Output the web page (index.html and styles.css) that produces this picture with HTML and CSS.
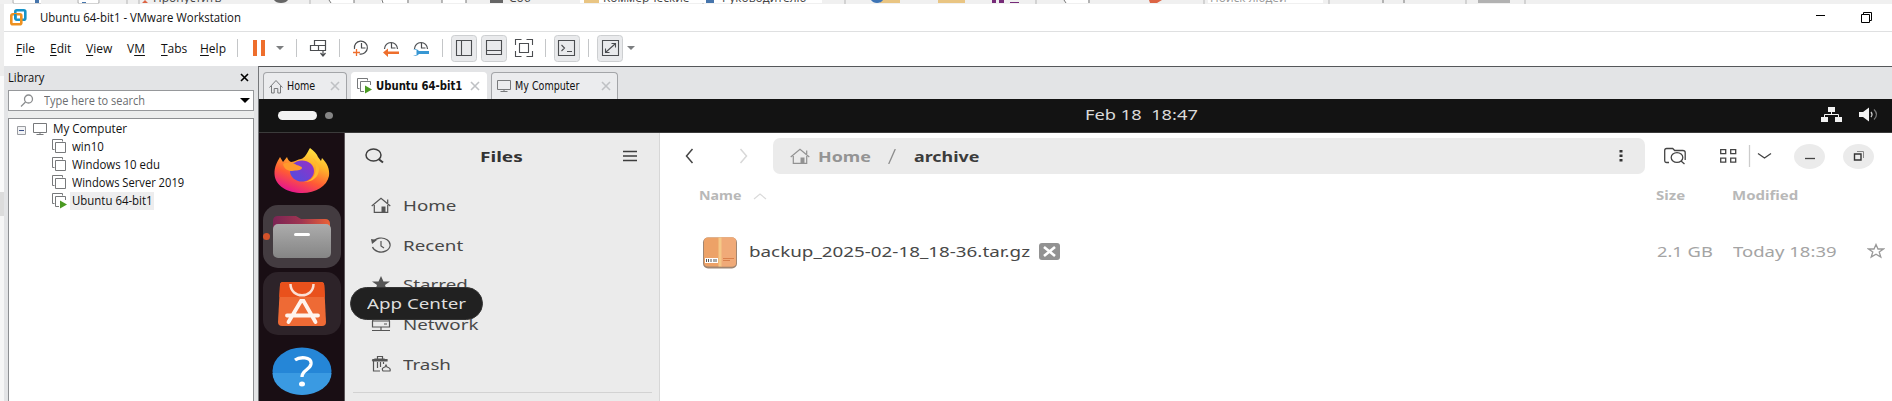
FILE: index.html
```
<!DOCTYPE html>
<html lang="en">
<head>
<meta charset="utf-8">
<title>Ubuntu 64-bit1 - VMware Workstation</title>
<link rel="stylesheet" href="styles.css">
</head>
<body>
<svg width="0" height="0" class="defs">
  <defs>
    <g id="house"><path d="M.5 8.5 7 1.5l6.500 7M2.500 7v7h2.700V9.500h3.600V14h2.700V7"/></g>
    <g id="vm"><path d="M2.500 10.500h-2V.5h10v2M3.500 3.500h10v10h-10z"/></g>
    <g id="vmrun"><path d="M2.500 10.500h-2V.5h10v2M7 13.500H3.500v-10h10V7"/><path d="M8 7.500l7 4-7 4z" fill="#4a9a22" stroke="none"/></g>
    <g id="monitor"><path d="M.5.5h13v9H.5zM7 9.500v2M3.500 11.500h7"/></g>
    <g id="cross"><path d="M1 1l8 8M9 1l-8 8"/></g>
    <g id="nhouse"><path d="M.7 9 10 1.200 19.300 9M3.300 8v7.300h13.400V8M16.700 6V2.500"/><path d="M10.500 9.500h4v5.500h-4z" fill="currentColor" stroke="none"/></g>
  </defs>
</svg>

<div class="behind">
  <svg class="behind-art" width="1892" height="4">
    <path d="M13 0v3h28M78 0v3h21V0M127 0v4M139 0v4M310 0v4M638 0v4M703 0v4M845 0v4M1036 0v4M1204 0v4M1329 0v4M1466 0v4M1525 0v4" fill="none" stroke="#b5b5b5"/>
    <path d="M14 0h27v3H14zM79 0h19v3H79zM330 0h24v3h-24zM381 0h26v3h-26zM442 0h24v3h-24zM580 0h242v3H580zM1065 0h23v3h-23zM1208 0h115v3h-115z" fill="#fff"/>
    <path d="M35 0h4v3h-4zM82 2h4v1h-4zM706 0h8v3h-8z" fill="#4675ac"/>
    <path d="M142 3l3-3 3 3zM1149 0h13l-5 3h-7z" fill="#dc6444"/>
    <path d="M274 0h14q-2 3-7 3t-7-3M490 0h13v3h-13z" fill="#666"/>
    <path d="M584 0h15v3h-15zM880 0h20v3h-20zM938 0h27v3h-27z" fill="#e9c583"/>
    <path d="M871 0h12q-2 3-6 3t-6-3" fill="#3d74b5"/>
    <path d="M992 0h4v3h-4zM999 0h5v3h-5zM1010 2h9v1h-9z" fill="#762b78"/>
    <path d="M329 0l2 3M354 0v3M382 0l1 3M408 0v3M442 0v3M466 0v3M1064 0l2 3M1089 0v3M1383 0v3M1404 0v3" stroke="#777" fill="none"/>
    <path d="M1478 0h32v3h-32z" fill="#b2b2b2"/>
  </svg>
  <span class="bt b1">Пропустить</span><span class="bt b2">Соб</span><span class="bt b3">Коммерческие</span><span class="bt b4">Руководителю</span><span class="bt b5">Поиск людей</span>
</div>

<div class="shell">
<div class="sliver"></div>
<div class="window">
  <header class="title">
    <svg width="17" height="17" viewBox="0 0 17 17" fill="none" stroke-width="2.600"><rect x="5.300" y="1.300" width="10" height="9.500" rx="1.500" stroke="#1793c8"/><rect x="1.300" y="5.300" width="10" height="10" rx="1.500" stroke="#ee9120"/><path d="M5.300 5v4.500" stroke="#1793c8"/></svg>
    <span class="t title-text">Ubuntu 64-bit1 - VMware Workstation</span>
    <svg class="winbtns" width="58" height="13" fill="none" stroke="#000"><path d="M0 4.500h9M45.500 3.500h8v8h-8zM47.500 3V1.500h8V9.500H54"/></svg>
  </header>

  <nav class="menu">
    <span class="m m-file"><u>F</u>ile</span><span class="m m-edit"><u>E</u>dit</span><span class="m m-view"><u>V</u>iew</span><span class="m m-vm">V<u>M</u></span><span class="m m-tabs"><u>T</u>abs</span><span class="m m-help"><u>H</u>elp</span>
    <svg class="tools" width="420" height="32" viewBox="230 33 420 32" fill="none" stroke="#4b4d50">
      <path d="M237.500 39v18M296.500 39v18M339.500 39v18M442.500 39v18M545.500 39v18M588.500 39v18" stroke="#c4c6c8"/>
      <path d="M253 40h4v16h-4zM261 40h4v16h-4z" fill="#ee6e2c" stroke="none"/>
      <path d="M276 46h8l-4 4zM627 46h8l-4 4z" fill="#7c7e80" stroke="none"/>
      <path d="M314.500 40.500h11v5h-11zM310.500 45.500h8v5h-8zM318.500 45.500h7v5h-7zM323 50v6M320.500 53l2.500 3 2.500-3" stroke-width="1.200"/>
      <path d="M354.500 49a6.500 6.500 0 1 1 5 5M361.500 43v5h4" stroke-width="1.200"/><path d="M353 52.500h7M356.500 49v7" stroke="#ee6e2c" stroke-width="1.300"/>
      <path d="M384.500 49a6.500 6.500 0 1 1 13 0M391.500 43v5h4" stroke-width="1.200"/><path d="M383 52.500l5-4v3h11v2.500h-11v3z" fill="#ee6e2c" stroke="none"/>
      <path d="M414.500 49a6.500 6.500 0 1 1 13 0M421.500 43v5h4" stroke-width="1.200"/><path d="M413 50q4-2 6 1h10v3h-10q-2 3-6 1h3.500v-5z" fill="#3897d3" stroke="none"/>
      <g fill="#e9eaec" stroke="#cdcfd1"><rect x="451.500" y="35.500" width="25" height="26" rx="3"/><rect x="481.500" y="35.500" width="25" height="26" rx="3"/><rect x="554.500" y="35.500" width="25" height="26" rx="3"/><rect x="597.500" y="35.500" width="25" height="26" rx="3"/></g>
      <path d="M456.500 40.500h15v15h-15zM461.500 41v14M486.500 40.500h15v14h-15zM487 50.500h14M519.500 43.500h9v9h-9zM515.500 45v-5.500h6M526.500 39.500h6V45M532.500 51v5.500h-6M521.500 56.500h-6V51M558.500 40.500h16v15h-16zM561.500 45l3 3-3 3M567 51.500h5M602.500 40.500h16v15h-16zM606 52l9-8M611.500 43.500h4v4M609.500 52.500h-4v-4" stroke-width="1.100"/>
    </svg>
  </nav>

  <div class="body">
    <aside class="library">
      <div class="lib-head"><span class="t lib-t">Library</span><svg width="10" height="10" fill="none" stroke="#000" stroke-width="1.600"><path d="M1 1l7 7M8 1l-7 7"/></svg></div>
      <div class="search">
        <svg width="14" height="14" fill="none" stroke="#8b8d8f" stroke-width="1.300"><circle cx="8.500" cy="5" r="4"/><path d="M5.500 8 1 12.500"/></svg>
        <span class="t search-t">Type here to search</span>
        <svg class="arrow" width="10" height="5"><path d="M0 0h10L5 5z"/></svg>
      </div>
      <div class="tree">
        <div class="row root"><svg class="minus" width="9" height="9" fill="none"><path d="M.5.5h8v8h-8z" stroke="#9a9ca0" fill="#f2f3f5"/><path d="M2 4.500h5" stroke="#3a4f87"/></svg><svg width="14" height="12" fill="none" stroke="#77797b"><use href="#monitor"/></svg><span class="t n-my">My Computer</span></div>
        <div class="row"><svg class="i" width="15" height="16"><use href="#vm"/></svg><span class="t n-w10">win10</span></div>
        <div class="row"><svg class="i" width="15" height="16"><use href="#vm"/></svg><span class="t n-edu">Windows 10 edu</span></div>
        <div class="row"><svg class="i" width="15" height="16"><use href="#vm"/></svg><span class="t n-srv">Windows Server 2019</span></div>
        <div class="row"><svg class="i" width="15" height="16"><use href="#vmrun"/></svg><span class="sel"><span class="t n-ubu">Ubuntu 64-bit1</span></span></div>
      </div>
    </aside>

    <section class="console">
      <div class="tabs">
        <div class="tab tab-home"><svg class="i" width="14" height="15"><use href="#house"/></svg><span class="t tt-home">Home</span><svg class="x" width="10" height="10"><use href="#cross"/></svg></div>
        <div class="tab tab-ubu active"><svg class="i" width="15" height="16"><use href="#vmrun"/></svg><span class="t tt-ubu">Ubuntu 64-bit1</span><svg class="x" width="10" height="10"><use href="#cross"/></svg></div>
        <div class="tab tab-my"><svg class="i" width="14" height="12"><use href="#monitor"/></svg><span class="t tt-my">My Computer</span><svg class="x" width="10" height="10"><use href="#cross"/></svg></div>
      </div>

      <div class="topbar">
        <div class="ws"><i class="pill"></i><i class="dot"></i></div>
        <span class="t clock">Feb 18&nbsp; 18:47</span>
        <svg class="status" width="60" height="16" fill="#f2f2f2"><path d="M7 0h7v5H7zM0 10h7v5H0zM14 10h7v5h-7z"/><path d="M10.500 4v4M3.500 10V7.500h14V10" fill="none" stroke="#f2f2f2"/><path d="M38 5h4l6-4.500v14L42 10h-4z"/><path d="M50 5q2 2.500 0 5" fill="none" stroke="#ccc" stroke-width="1.300"/><path d="M53 2.500q5 5 0 10" fill="none" stroke="#777" stroke-width="1.300"/></svg>
      </div>

      <div class="guest">
        <div class="dock">
          <div class="app">
            <svg width="56" height="48" viewBox="0 0 56 48">
              <defs><linearGradient id="fx" x1=".85" y1="0" x2=".35" y2="1"><stop offset="0" stop-color="#fff04a"/><stop offset=".35" stop-color="#ffb42a"/><stop offset=".68" stop-color="#ff5a35"/><stop offset="1" stop-color="#e6178c"/></linearGradient><linearGradient id="fp" x1="0" y1="1" x2="1" y2="0"><stop offset="0" stop-color="#4c4fe0"/><stop offset="1" stop-color="#9a2fc4"/></linearGradient></defs>
              <path d="M36 1c4 3 7 6 8 9l3 4 1-3c5 5 8 11 7 18-2 10-13 17-27 17S1 39 .5 27C.3 20 3 15 6 10l3 5 4-5c1 3 2 4 4 5 4 0 7-3 10-3 4-1 6-6 9-11z" fill="url(#fx)"/>
              <ellipse cx="28" cy="24" rx="12" ry="10.500" fill="url(#fp)"/>
              <path d="M9 17c5-2 9-1 12 0 3 2 7 2 7 4-1 3-6 2-10 3-4 0-8-2-9-7z" fill="#ff9a2c"/>
              <path d="M38 11c5 4 5 14 1 19-3 4-7 5-11 5 10 1 17-5 17-13 0-5-3-9-7-11z" fill="#ffb92e"/>
            </svg>
          </div>
          <div class="app files">
            <i class="run"></i>
            <svg width="60" height="46" viewBox="0 0 60 46">
              <defs><linearGradient id="fo"><stop offset="0" stop-color="#7b2454"/><stop offset=".5" stop-color="#a03551"/><stop offset="1" stop-color="#ec6236"/></linearGradient><linearGradient id="fg" x2="0" y2="1"><stop offset="0" stop-color="#acacac"/><stop offset="1" stop-color="#858585"/></linearGradient></defs>
              <path d="M1 7q0-5 5-5h18l5 3h24q5 0 5 5v20H1z" fill="url(#fo)"/><rect x="1" y="10" width="58" height="34" rx="5" fill="url(#fg)"/><rect x="22" y="19" width="16" height="3" rx="1.500" fill="#fff"/>
            </svg>
          </div>
          <div class="app center">
            <svg width="50" height="46" viewBox="0 0 50 46">
              <path d="M6 1h38q3 0 3.200 3L49 41q0 4-4 4H5q-4 0-4-4L3 4q.2-3 3-3z" fill="#ee6a35"/><path d="M6 1h38q3 0 3.200 3L48 16H2.300L3 4q.2-3 3-3z" fill="#e9511c"/>
              <path d="M13.500 3c0 15 23 15 23 0" fill="none" stroke="#fbe0d5" stroke-width="2.500"/>
              <path d="M11.500 41 24 20h2.500L38.500 41M10 34.500h31" fill="none" stroke="#fff3ed" stroke-width="3.800" stroke-linecap="round"/>
            </svg>
          </div>
          <div class="app help">
            <svg width="60" height="48" viewBox="0 0 60 48"><ellipse cx="30" cy="24" rx="29.500" ry="23.500" fill="#2586d7"/><path d="M.5 26a29.500 22 0 0 0 59 0z" fill="#3a9ae2"/><path d="M23 13c4-3 17-4 16 4-1 6-9 6-9 13" fill="none" stroke="#fff" stroke-width="3.300"/><ellipse cx="30" cy="37" rx="3" ry="2.500" fill="#fff"/></svg>
          </div>
        </div>

        <div class="places">
          <div class="places-head">
            <svg width="20" height="16" fill="none" stroke="#3d3d3d" stroke-width="1.500"><ellipse cx="8.500" cy="7" rx="7.500" ry="6"/><path d="M13.500 11l4.500 3.500" stroke-width="2"/></svg>
            <span class="t g-files">Files</span>
            <svg width="14" height="12" stroke="#3d3d3d" stroke-width="1.300"><path d="M0 1.500h14M0 6h14M0 10.500h14"/></svg>
          </div>
          <div class="place"><svg width="20" height="16"><use href="#nhouse"/></svg><span class="t g-home">Home</span></div>
          <div class="place"><svg width="20" height="16"><path d="M2 5a9 7 0 1 1-.5 5M10 4v5l3 2"/><path d="M0 2l6 1-5 4z" fill="#555" stroke="none"/></svg><span class="t g-recent">Recent</span></div>
          <div class="place"><svg width="20" height="16"><path d="M10 0l2.500 5.500H19l-5 3.500 2 6-6-3.500L4 15l2-6-5-3.500h6.500z" fill="#555" stroke="none"/></svg><span class="t g-starred">Starred</span></div>
          <div class="place"><svg width="20" height="16"><path d="M3 1h14l1.500 4v6h-17V5zM2 5h16M1 14.500h18M10 11v4M13 8h3"/></svg><span class="t g-network">Network</span></div>
          <div class="place"><svg width="20" height="16"><path d="M1 4.500 4 3h9l3 1.500M6.500 2.500v-2h5v2M2.500 5v10H9M6.500 6v6M9.500 6v5M12.500 6v2"/><path d="M2 3.500h14v1.500H2z" fill="#555"/><path d="M12 15q-2-3 2-4l1-2 1 2q4 1 3 4z"/></svg><span class="t g-trash">Trash</span></div>
          <hr>
        </div>

        <main class="pane">
          <div class="bar">
            <svg class="back" width="9" height="16" fill="none" stroke="#444" stroke-width="1.500"><path d="M7.500 1 1.500 8l6 7"/></svg>
            <svg class="fwd" width="9" height="16" fill="none" stroke="#d8d8d8" stroke-width="1.500"><path d="M1.500 1l6 7-6 7"/></svg>
            <div class="crumbs">
              <svg class="gh" width="20" height="16"><use href="#nhouse"/></svg><span class="t c-home">Home</span><svg class="slash" width="8" height="15" stroke="#8c8c8c" stroke-width="1.300"><path d="M7.300 0 .7 15"/></svg><span class="t c-arch">archive</span>
              <svg class="dots" width="4" height="12" fill="#333"><path d="M.5 0h3v2.500h-3zM.5 4.500h3V7h-3zM.5 9h3v2.500h-3z"/></svg>
            </div>
            <svg class="acts" width="116" height="24" fill="none" stroke="#444" stroke-width="1.300"><path d="M5 18.500H2.700q-2 0-2-2v-10q0-2 2-2h6l2 2h8q2.500 0 2.500 2V16"/><ellipse cx="13" cy="13.500" rx="5.800" ry="4.800"/><path d="M17 17l3.500 3M56.700 5.700h5v4h-5zM66.700 5.700h5v4h-5zM56.700 14.200h5v4h-5zM66.700 14.200h5v4h-5zM94 9.500l6.500 4.500 6.500-4.500"/><path d="M85.500 1v22" stroke="#ccc"/></svg>
            <div class="ctl"><svg width="12" height="12" stroke="#444" stroke-width="1.300"><path d="M1 8.500h10"/></svg></div>
            <div class="ctl"><svg width="12" height="12" fill="none" stroke="#333" stroke-width="1.400"><path d="M1.500 4h6.500v6H1.500z"/><path d="M4 1.500h6.500v6.500" stroke="#888" stroke-width="1"/></svg></div>
          </div>
          <div class="cols"><span class="t h-name">Name</span><svg width="14" height="7" fill="none" stroke="#dadada" stroke-width="1.200"><path d="M1 6l6-5 6 5"/></svg><span class="t h-size">Size</span><span class="t h-mod">Modified</span></div>
          <div class="file">
            <svg class="pkg" width="36" height="33" viewBox="0 0 36 33"><rect x="1" y="1.500" width="34" height="31" rx="5" fill="#a08672"/><rect x="2" y="1.500" width="32" height="29" rx="4" fill="#eda267"/><path d="M19 1.500h11q4 0 4 4v21q0 4-4 4H19z" fill="#f0aa78"/><path d="M16.500 1.500h3v29h-3z" fill="#f5c887"/><path d="M3 22h13v5H3z" fill="#fff"/><path d="M4.500 23v3M6.500 23v3M9 23v3M12 23v3M14 23v3" stroke="#555"/><path d="M21 22.500h11M21 24.500h7" stroke="#d9814d" fill="none"/></svg>
            <span class="t f-name">backup_2025-02-18_18-36.tar.gz</span>
            <svg width="21" height="17"><rect width="21" height="17" rx="3" fill="#929292"/><path d="M5 4l11 9M16 4 5 13" stroke="#fff" stroke-width="2.600"/></svg>
            <span class="t f-size">2.1 GB</span><span class="t f-mod">Today 18:39</span>
            <svg class="star" width="18" height="16" fill="none" stroke="#999" stroke-width="1.300"><path d="M9 1.500l2 4.500h5.500l-4.300 3 1.600 5L9 11.200 4.200 14l1.600-5L1.500 6H7z"/></svg>
          </div>
        </main>
        <div class="tip"><span class="t tip-t">App Center</span></div>
      </div>
    </section>
  </div>
</div>
</div>
</body>
</html>
```
FILE: styles.css
```
* { box-sizing: border-box; }
body { margin: 0; width: 1892px; height: 401px; overflow: hidden; background: #fff; color: #111; font: 12px/16px "Open Sans", "Noto Sans", sans-serif; display: flex; flex-direction: column; }
svg { display: block; flex: none; }
.defs { position: absolute; }

/* t: a label set to a fixed width, with its glyphs scaled horizontally by --s */
.t { display: block; flex: none; white-space: nowrap; transform: scaleX(var(--s, 1)); transform-origin: 0 50%; }

.behind { position: relative; height: 4px; flex: none; background: #f0f0f0; overflow: hidden; }
.bt { position: absolute; top: -10px; font-size: 12px; color: #444; white-space: nowrap; }
.b1 { left: 153px; }
.b2 { left: 509px; }
.b3 { left: 603px; }
.b4 { left: 722px; }
.b5 { left: 1210px; color: #999; }

.shell { flex: 1; display: flex; min-height: 0; }
.sliver { width: 4px; flex: none; background: linear-gradient(#ededed 72px, #fafafa 72px 188px, #dcdcdc 188px 212px, #f6f6f6 212px); }
.window { width: 1888px; display: flex; flex-direction: column; background: #fff; }
.title { height: 28px; flex: none; display: flex; align-items: center; padding-left: 6px; border-bottom: 1px solid #dfe0e1; }
.title-text { margin-left: 13px; width: 200px; --s: .95; }
.winbtns { margin-left: auto; margin-right: 18px; }

.menu { height: 34px; flex: none; display: flex; align-items: center; padding-left: 12px; }
.m { white-space: nowrap; flex: none; }
.m-file { width: 34px; }
.m-edit { width: 36px; }
.m-view { width: 41px; }
.m-vm { width: 34px; }
.m-tabs { width: 39px; }
.m-help { width: 30px; }
u { text-underline-offset: 2px; }

.body { flex: 1; display: flex; min-height: 0; background: #e3e4e6; }
.library { width: 254px; flex: none; display: flex; flex-direction: column; padding: 0 4px; }
.lib-head { height: 24px; flex: none; display: flex; align-items: center; justify-content: space-between; padding-right: 4px; }
.lib-t { --s: .93; }
.search { height: 21px; flex: none; display: flex; align-items: center; background: #fff; border: 1px solid #96989b; padding: 0 3px 0 11px; color: #6b6d6f; }
.search-t { margin-left: 10px; width: 101px; --s: .915; }
.arrow { margin-left: auto; }
.tree { margin-top: 7px; flex: 1; background: #fff; border: 1px solid #8d8f92; border-bottom: 0; padding-top: 1px; box-shadow: 0 -7px 0 #eceded; }
.row { height: 18px; display: flex; align-items: center; padding-left: 43px; }
.root { padding-left: 8px; gap: 7px; }
.minus { margin-top: 2px; }
.i { fill: none; stroke: #77797b; }
.row .t { margin-left: 5px; --s: .952; }
.root .t { margin-left: -1px; --s: .968; }
.row .n-srv { --s: .93; }
.sel { width: 84px; height: 18px; background: #ededee; margin-left: 3px; }
.row .sel .t { margin: 1px 0 0 2px; }

.console { flex: 1; display: flex; flex-direction: column; border-top: 1px solid #55575a; border-left: 1px solid #75777a; min-width: 0; }
.tabs { height: 32px; flex: none; display: flex; align-items: flex-end; padding-left: 4px; color: #111; }
.tab { height: 27px; display: flex; align-items: center; background: #ebecee; border: 1px solid #a3a5a8; border-bottom: 0; border-radius: 4px 4px 0 0; padding: 0 6px 0 5px; }
.tab-home { width: 84px; }
.tab-ubu { width: 136px; margin-left: 4px; }
.tab-my { width: 127px; margin-left: 4px; }
.tab.active { background: #fff; border-color: #fff; }
.tab .t { width: 28px; margin-left: 4px; font: 11.500px "DejaVu Sans", sans-serif; --s: .83; }
.tab .tt-ubu { font-weight: bold; --s: .88; }
.tab .x { margin-left: auto; fill: none; stroke: #bfc1c4; stroke-width: 1.600; }

.topbar { height: 34px; flex: none; background: #131313; border-bottom: 1px solid #3b3b3b; display: grid; grid-template-columns: 826px 1fr auto; align-items: center; padding: 0 11px 0 0; }
.ws { display: flex; align-items: center; gap: 8px; padding: 0 0 0 19px; }
.pill { width: 39px; height: 9px; border-radius: 5px; background: #f2f2f2; }
.dot { width: 8px; height: 7px; border-radius: 50%; background: #858585; }
.clock { font: 14px/20px "Noto Sans", sans-serif; color: #dadada; --s: 1.305; margin-top: -2px; }
.status { margin-top: -2px; }

.guest { position: relative; flex: 1; display: flex; min-height: 0; overflow: hidden; }
.guest .t { font-family: "Noto Sans", sans-serif; font-size: 15px; line-height: 20px; color: #484848; --s: 1.25; }
.dock { width: 86px; flex: none; background: #190e14; padding: 5px 3px 0 4px; display: flex; flex-direction: column; gap: 4px; border-right: 1px solid #5c5559; }
.app { position: relative; height: 63px; flex: none; border-radius: 15px; display: flex; align-items: center; justify-content: center; }
.app:first-child { padding-top: 3px; }
.files { background: #433b40; }
.center { background: #2d2329; }
.run { position: absolute; left: 0; top: 28px; width: 7px; height: 7px; border-radius: 50%; background: #d3522a; }

.places { width: 315px; flex: none; background: #ebebeb; border-right: 1px solid #d7d7d7; }
.places-head { height: 46px; display: flex; align-items: center; padding: 0 22px 0 20px; justify-content: space-between; }
.guest .g-files { width: 48px; font-weight: bold; color: #333; --s: 1.270; }
.place { height: 39.800px; display: flex; align-items: center; padding-left: 26px; gap: 12px; }
.places-head + .place { margin-top: 6px; }
.place svg, .gh { fill: none; stroke: #555; stroke-width: 1.200; color: #555; }
hr { border: 0; height: 1px; background: #d2d2d2; margin: 8px 7px 0 8px; }

.pane { flex: 1; min-width: 0; overflow: hidden; background: #fff; }
.bar { height: 46px; display: flex; align-items: center; padding-left: 25px; }
.fwd { margin-left: 45px; }
.crumbs { margin-left: 25px; width: 872px; flex: none; height: 36px; background: #ebebeb; border-radius: 7px; display: flex; align-items: center; padding: 0 22px 0 17px; }
.crumbs .t { font-weight: bold; }
.crumbs .gh { stroke: #929292; color: #929292; }
.guest .c-home { margin-left: 8px; width: 53px; color: #949494; --s: 1.190; }
.slash { margin-left: 17px; }
.guest .c-arch { margin-left: 18px; --s: 1.190; color: #3c3c3c; }
.dots { margin-left: auto; }
.acts { margin-left: 19px; }
.ctl { width: 31px; height: 25px; border-radius: 50%; background: #ebebeb; margin-left: 14px; flex: none; display: flex; align-items: center; justify-content: center; }
.ctl + .ctl { margin-left: 18px; }
.cols { height: 34px; display: flex; align-items: center; padding-left: 39px; }
.guest .cols .t { font-size: 12.500px; font-weight: bold; color: #b8b8b8; --s: 1.200; }
.guest .cols .h-name { width: 54px; --s: 1.140; }
.h-size { width: 76px; margin-left: 889px; }
.file { margin-top: 19px; height: 38px; display: flex; align-items: center; padding-left: 42px; }
.pkg { margin-top: 2px; }
.guest .f-name { margin-left: 11px; width: 290px; --s: 1.254; }
.guest .f-size { width: 76px; margin-left: 597px; color: #a4a4a4; --s: 1.220; }
.guest .f-mod { width: 134px; color: #a4a4a4; --s: 1.235; }

.tip { position: absolute; left: 91px; top: 154px; width: 133px; height: 33px; border-radius: 17px; background: #212121; border: 1px solid #333; padding: 5px 0 0 16px; }
.guest .tip-t { color: #dedede; --s: 1.250; }
```
